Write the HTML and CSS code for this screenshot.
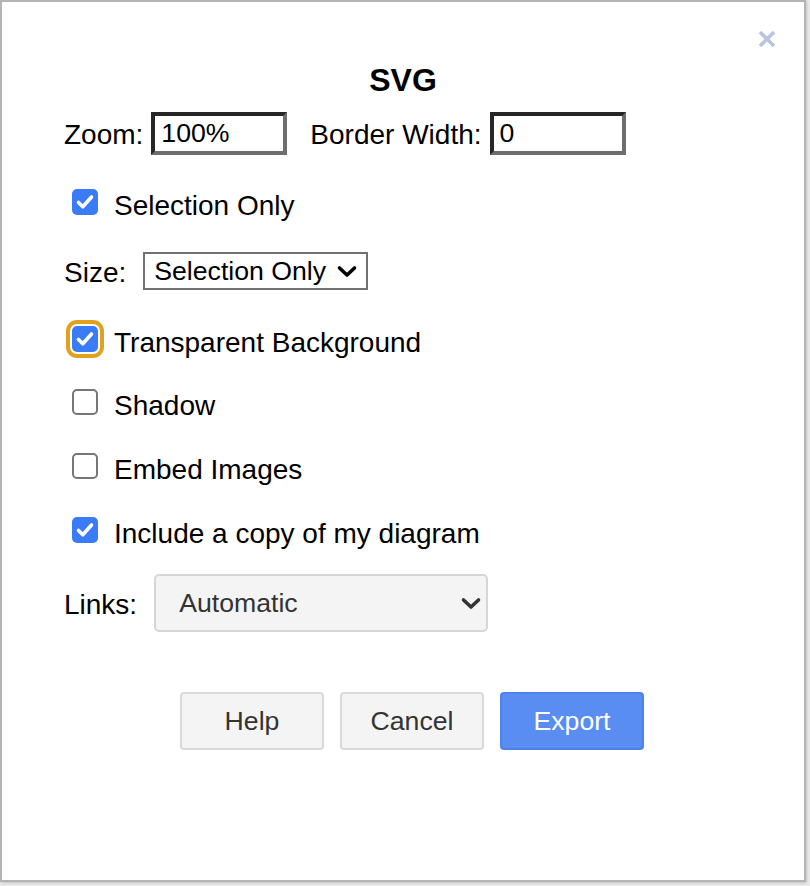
FILE: index.html
```html
<!DOCTYPE html>
<html lang="en">
<head>
<meta charset="utf-8">
<title>SVG</title>
<link rel="stylesheet" href="styles.css">
</head>
<body>
<div class="dialog">
  <button class="close" aria-label="Close">
    <svg width="18" height="18" viewBox="0 0 18 18"><path d="M2 2 L16 16 M16 2 L2 16" stroke="#b8c4dc" stroke-width="3.6" stroke-linecap="butt" fill="none"/></svg>
  </button>
  <h1 class="title">SVG</h1>
  <div class="form">
    <div class="row inputs">
      <label class="lbl">Zoom:</label><input class="num" type="text" value="100%">
      <label class="lbl lbl-bw">Border Width:</label><input class="num num-bw" type="text" value="0">
    </div>

    <div class="row check-row r-sel">
      <span class="cb on"><svg width="26" height="26" viewBox="0 0 26 26"><path d="M6.5 13.5 L10.8 17.8 L19.5 8" stroke="#fff" stroke-width="3.6" stroke-linecap="round" stroke-linejoin="round" fill="none"/></svg></span>
      <span class="lbl">Selection Only</span>
    </div>

    <div class="row r-size">
      <span class="lbl">Size:</span>
      <div class="select size">
        <span>Selection Only</span>
        <svg width="22" height="13" viewBox="0 0 22 13"><path d="M3.5 3 L11 10 L18.5 3" stroke="#000" stroke-width="3.6" stroke-linecap="round" stroke-linejoin="round" fill="none"/></svg>
      </div>
    </div>

    <div class="row check-row r-trans">
      <span class="cb on focus"><svg width="26" height="26" viewBox="0 0 26 26"><path d="M6.5 13.5 L10.8 17.8 L19.5 8" stroke="#fff" stroke-width="3.6" stroke-linecap="round" stroke-linejoin="round" fill="none"/></svg></span>
      <span class="lbl">Transparent Background</span>
    </div>

    <div class="row check-row r-shadow">
      <span class="cb off"></span>
      <span class="lbl">Shadow</span>
    </div>

    <div class="row check-row">
      <span class="cb off"></span>
      <span class="lbl">Embed Images</span>
    </div>

    <div class="row check-row">
      <span class="cb on"><svg width="26" height="26" viewBox="0 0 26 26"><path d="M6.5 13.5 L10.8 17.8 L19.5 8" stroke="#fff" stroke-width="3.6" stroke-linecap="round" stroke-linejoin="round" fill="none"/></svg></span>
      <span class="lbl">Include a copy of my diagram</span>
    </div>

    <div class="row r-links">
      <span class="lbl">Links:</span>
      <div class="select links">
        <span>Automatic</span>
        <svg width="22" height="13" viewBox="0 0 22 13"><path d="M3.5 3 L11 10 L18.5 3" stroke="#333" stroke-width="3.6" stroke-linecap="round" stroke-linejoin="round" fill="none"/></svg>
      </div>
    </div>

    <div class="buttons">
      <button class="btn">Help</button>
      <button class="btn">Cancel</button>
      <button class="btn primary">Export</button>
    </div>
  </div>
</div>
</body>
</html>
```
FILE: styles.css
```css
* {
  box-sizing: border-box;
}

html,
body {
  margin: 0;
  padding: 0;
}

body {
  width: 810px;
  height: 886px;
  overflow: hidden;
  background: #ebebeb;
  font-family: "Liberation Sans", Arial, Helvetica, sans-serif;
  color: #000;
}

.dialog {
  position: relative;
  width: 806px;
  height: 882px;
  background: #fff;
  border: 2px solid #b4b4b4;
  box-shadow: 1px 1px 3px rgba(0, 0, 0, 0.18);
  padding-top: 58px;
}

.close {
  position: absolute;
  top: 28px;
  left: 756px;
  padding: 0;
  margin: 0;
  border: 0;
  background: none;
  width: 18px;
  height: 18px;
  cursor: pointer;
}

.close svg {
  display: block;
}

.title {
  margin: 0;
  font-size: 32px;
  line-height: 36px;
  font-weight: bold;
  text-align: center;
  padding-top: 2px;
}

.form {
  padding-left: 62px;
}

.row {
  display: flex;
  align-items: center;
}

.lbl {
  font-size: 28px;
  line-height: 32px;
  padding-top: 3px;
  white-space: nowrap;
}

.inputs {
  height: 43px;
  margin-top: 14px;
}

.num {
  width: 136px;
  height: 43px;
  margin: 0 0 0 8px;
  padding: 0 6px;
  border-width: 4px;
  border-style: solid;
  border-color: #262626 #6e6e6e #6e6e6e #262626;
  background: #fff;
  font-family: "Liberation Sans", Arial, Helvetica, sans-serif;
  font-size: 26.67px;
  color: #000;
  outline: none;
}

.num-bw {
  margin-left: 8px;
}

.lbl-bw {
  margin-left: 23px;
}

.check-row {
  height: 40px;
  margin-top: 24px;
}

.check-row .lbl {
  margin-left: 16px;
}

.cb {
  flex: none;
  width: 26px;
  height: 26px;
  margin-left: 8px;
  margin-bottom: 5px;
  border-radius: 5px;
}

.cb svg {
  display: block;
}

.cb.on {
  background: #3a7cf6;
}

.cb.off {
  border: 2px solid #767676;
  background: #fff;
}

.cb.focus {
  outline: 4px solid #e2a11c;
  outline-offset: 2px;
}

.r-sel {
  margin-top: 29px;
}

.r-size {
  height: 38px;
  margin-top: 28px;
}

.r-trans {
  margin-top: 31px;
}

.r-shadow {
  margin-top: 23px;
}

.select {
  display: flex;
  align-items: center;
  justify-content: space-between;
  margin-left: 17px;
  font-size: 26.67px;
  white-space: nowrap;
}

.select svg {
  flex: none;
  display: block;
}

.select.size {
  width: 225px;
  height: 38px;
  border: 2px solid #717171;
  padding: 0 8px 0 9px;
  color: #000;
  background: #fff;
}

.r-links {
  height: 58px;
  margin-top: 22px;
}

.select.links {
  width: 334px;
  height: 58px;
  border: 2px solid #d6d6d6;
  border-radius: 5px;
  background: #f4f4f4;
  padding: 0 4px 0 23px;
  color: #333;
}

.buttons {
  display: flex;
  gap: 16px;
  margin-top: 60px;
  margin-left: 116px;
}

.btn {
  width: 144px;
  height: 58px;
  border: 2px solid #d9d9d9;
  border-radius: 4px;
  background: #f4f4f4;
  color: #333;
  font-family: "Liberation Sans", Arial, Helvetica, sans-serif;
  font-size: 26.67px;
  padding: 0;
  cursor: pointer;
}

.btn.primary {
  background: #5a8df1;
  border-color: #4d82ec;
  color: #fff;
}
```
